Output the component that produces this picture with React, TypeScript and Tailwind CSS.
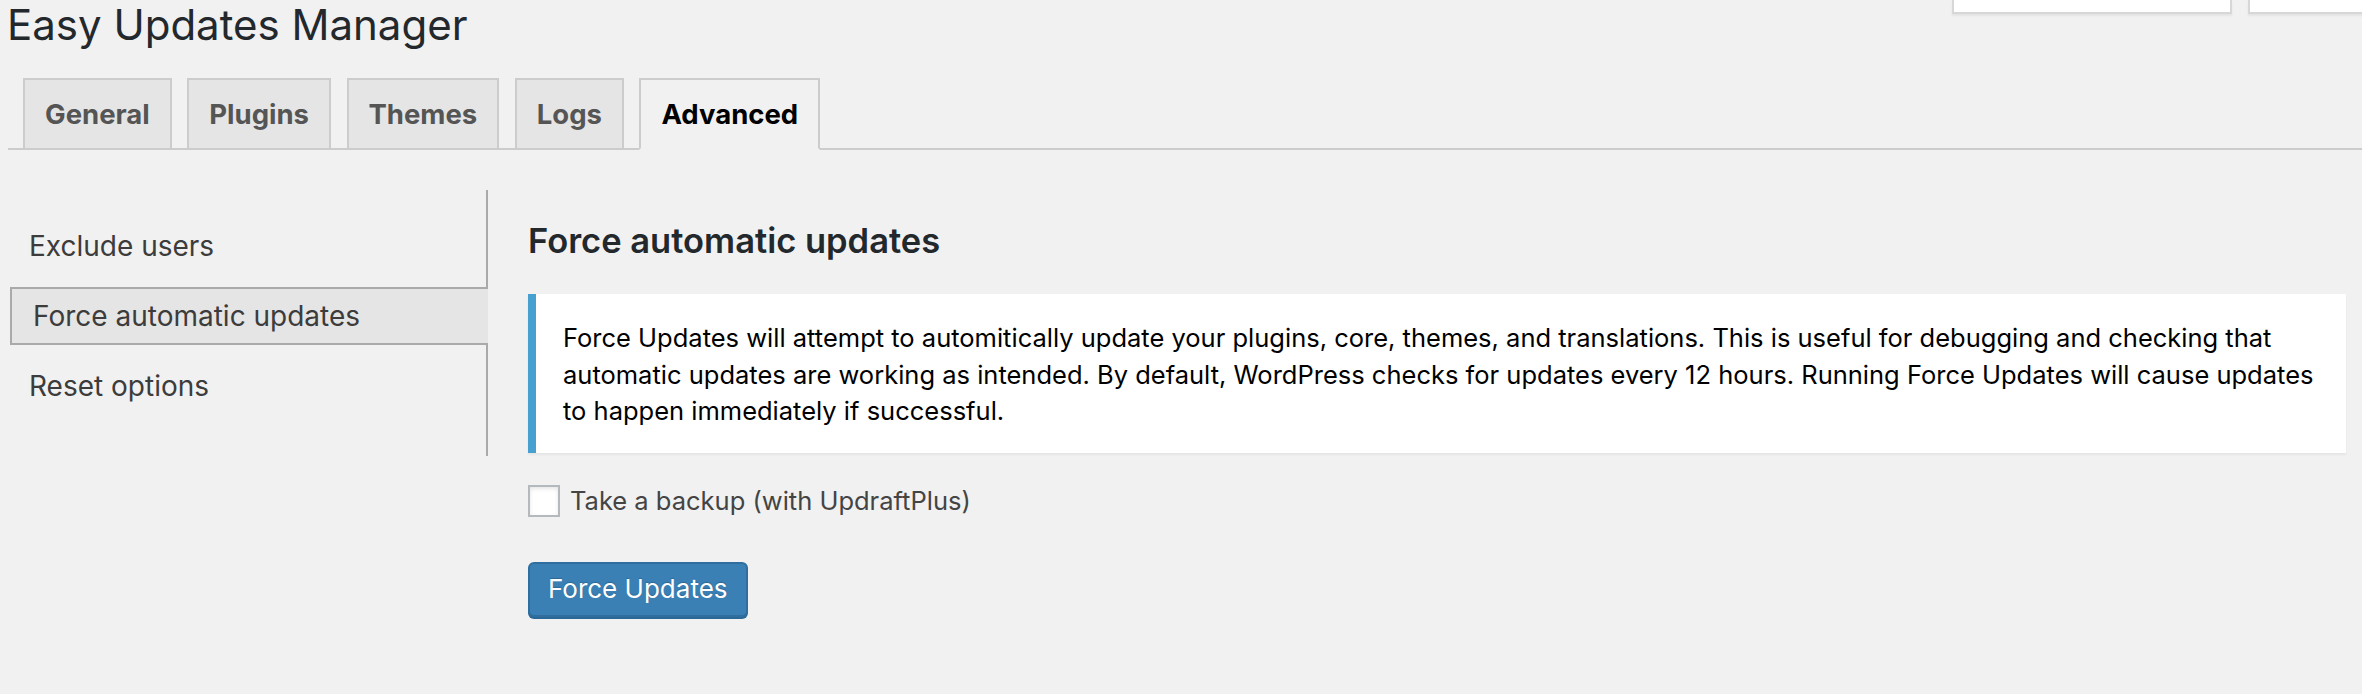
const tabs = ["General", "Plugins", "Themes", "Logs", "Advanced"];
const sideItems = ["Exclude users", "Force automatic updates", "Reset options"];

export default function App() {
  const active = "Advanced";
  const activeSide = "Force automatic updates";

  return (
    <div
      className="w-[2362px] h-[694px] overflow-hidden bg-[#f1f1f1] text-[#444]"
      style={{ fontFamily: "Inter, 'Noto Sans', sans-serif" }}
    >
      {/* Header */}
      <div className="flex items-start justify-between">
        <h1 className="pl-[7px] text-[42px] leading-[50px] font-normal text-[#23282d]">
          Easy Updates Manager
        </h1>
        <div className="flex gap-[16px] -mr-[20px]">
          <div className="w-[280px] h-[14px] bg-white border-x-2 border-b-2 border-[#d7d7d7] shadow-[0_2px_2px_rgba(0,0,0,0.06)]" />
          <div className="w-[134px] h-[14px] bg-white border-x-2 border-b-2 border-[#d7d7d7] shadow-[0_2px_2px_rgba(0,0,0,0.06)]" />
        </div>
      </div>

      {/* Tabs */}
      <nav className="ml-[8px] mt-[28px] flex items-end gap-[15.5px] pl-[15px] border-b-2 border-[#ccc]">
        {tabs.map((t) => (
          <a
            key={t}
            className={
              t === active
                ? "-mb-[2px] border-2 border-[#ccc] border-b-[#f1f1f1] bg-[#f1f1f1] px-[20px] py-[10px] text-[27.5px] leading-[48px] font-bold text-black"
                : "-mb-[2px] border-2 border-[#ccc] bg-[#e5e5e5] px-[20px] py-[10px] text-[27.5px] leading-[48px] font-bold text-[#555]"
            }
          >
            {t}
          </a>
        ))}
      </nav>

      <div className="mt-[40px] flex items-start">
        {/* Side menu */}
        <ul className="w-[488px] shrink-0 pl-[10px] pt-[27px] pb-[41px] flex flex-col gap-[12px] border-r-2 border-[#aaa]">
          {sideItems.map((s) => (
            <li
              key={s}
              className={
                s === activeSide
                  ? "-mr-[2px] border-2 border-r-0 border-[#aaa] bg-[#e5e5e5] pl-[21px] py-[7px] text-[28px] leading-[40px] text-[#3c3c3c]"
                  : "border-2 border-transparent pl-[17px] py-[7px] text-[28px] leading-[40px] text-[#3c3c3c]"
              }
            >
              {s}
            </li>
          ))}
        </ul>

        {/* Content */}
        <div className="ml-[40px] pr-[16px] flex-1">
          <h2 className="mt-[31px] text-[34.5px] leading-[40px] font-semibold text-[#23282d]">
            Force automatic updates
          </h2>

          <div className="mt-[33px] bg-white border-l-[8px] border-[#48a0d0] pl-[27px] pr-[6px] pt-[26px] pb-[23px] shadow-[0_2px_2px_rgba(0,0,0,0.05)]">
            <p className="text-[25.5px] leading-[36.5px] text-black">
              Force Updates will attempt to automitically update your plugins, core, themes, and translations. This is
              useful for debugging and checking that automatic updates are working as intended. By default, WordPress
              checks for updates every 12 hours. Running Force Updates will cause updates to happen immediately if
              successful.
            </p>
          </div>

          <label className="mt-[32px] flex items-center gap-[10px]">
            <input
              type="checkbox"
              className="appearance-none w-[32px] h-[32px] bg-white border-2 border-[#b4b9be] shadow-[inset_0_2px_4px_rgba(0,0,0,0.1)]"
            />
            <span className="text-[25.5px] leading-[32px] text-[#444]">Take a backup (with UpdraftPlus)</span>
          </label>

          <button className="mt-[45px] h-[55px] px-[18px] rounded-[6px] bg-[#3a80b5] border-2 border-[#2f6f9f] shadow-[0_2px_0_#2b6896] text-[26px] leading-[50px] text-white [text-shadow:0_-1px_1px_#2b6896]">
            Force Updates
          </button>
        </div>
      </div>
    </div>
  );
}
